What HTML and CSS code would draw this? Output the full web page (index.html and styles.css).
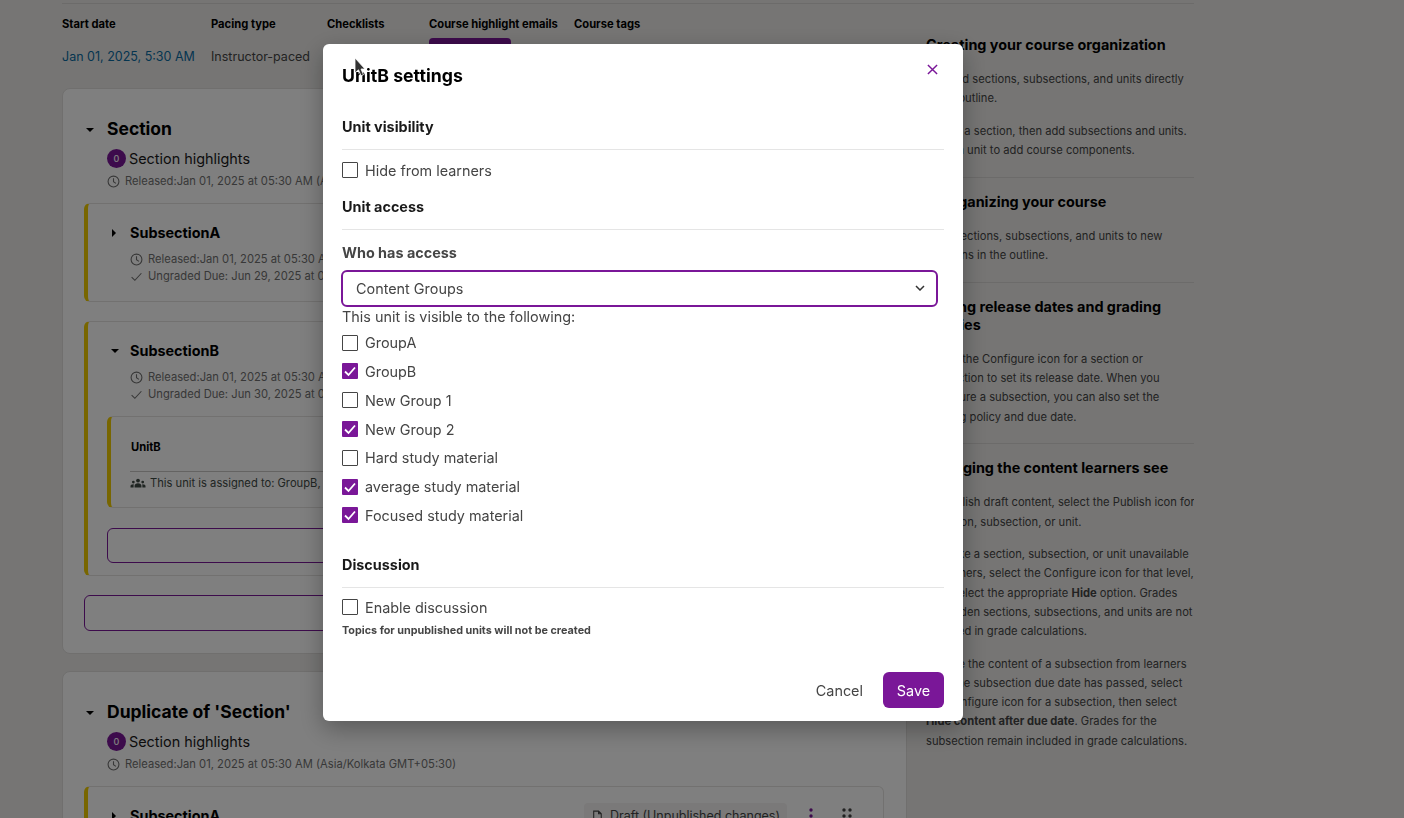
FILE: index.html
```html
<!DOCTYPE html>
<html lang="en">
<head>
    <meta charset="UTF-8">
    <title>Course outline</title>
    <link rel="stylesheet" href="styles.css">
</head>
<body>
    <div class="page">
        <main class="outline">
            <div class="stats">
                <div class="stat stat-date">
                    <div class="stat-label">Start date</div>
                    <a class="stat-link">Jan 01, 2025, 5:30 AM</a>
                </div>
                <div class="stat stat-pacing">
                    <div class="stat-label">Pacing type</div>
                    <div class="stat-value">Instructor-paced</div>
                </div>
                <div class="stat stat-check">
                    <div class="stat-label">Checklists</div>
                </div>
                <div class="stat stat-emails">
                    <div class="stat-label">Course highlight emails</div>
                    <div class="stat-button"></div>
                </div>
                <div class="stat">
                    <div class="stat-label">Course tags</div>
                </div>
            </div>

            <section class="section-card">
                <div class="section-title"><span class="caret-down"></span>Section</div>
                <div class="highlights"><span class="badge">0</span>Section highlights</div>
                <div class="meta meta-section">
                    <svg class="icon" viewBox="0 0 24 24"><circle cx="12" cy="12" r="10"/><path d="M12 6v6.500l4.500 3"/></svg>
                    Released:Jan 01, 2025 at 05:30 AM (Asia/Kolkata GMT+05:30)
                </div>

                <div class="sub-card sub-a">
                    <div class="sub-title"><span class="caret-right"></span>SubsectionA</div>
                    <div class="meta">
                        <svg class="icon" viewBox="0 0 24 24"><circle cx="12" cy="12" r="10"/><path d="M12 6v6.500l4.500 3"/></svg>
                        Released:Jan 01, 2025 at 05:30 AM (Asia/Kolkata GMT+05:30)
                    </div>
                    <div class="meta">
                        <svg class="icon" viewBox="0 0 24 24"><path d="M3 13l6 6L21 6"/></svg>
                        Ungraded Due: Jun 29, 2025 at 05:30 AM (Asia/Kolkata GMT+05:30)
                    </div>
                </div>

                <div class="sub-card sub-b">
                    <div class="sub-title"><span class="caret-small"></span>SubsectionB</div>
                    <div class="meta">
                        <svg class="icon" viewBox="0 0 24 24"><circle cx="12" cy="12" r="10"/><path d="M12 6v6.500l4.500 3"/></svg>
                        Released:Jan 01, 2025 at 05:30 AM (Asia/Kolkata GMT+05:30)
                    </div>
                    <div class="meta">
                        <svg class="icon" viewBox="0 0 24 24"><path d="M3 13l6 6L21 6"/></svg>
                        Ungraded Due: Jun 30, 2025 at 05:30 AM (Asia/Kolkata GMT+05:30)
                    </div>

                    <div class="unit-card">
                        <div class="unit-title">UnitB</div>
                        <div class="unit-access">
                            <svg class="icon-people" viewBox="0 0 24 16"><circle cx="12" cy="4" r="3"/><circle cx="4.500" cy="6.500" r="2.200"/><circle cx="19.500" cy="6.500" r="2.200"/><path d="M6.500 15v-2.500C6.500 10 9 8.500 12 8.500s5.500 1.500 5.500 4V15zM0 15v-2c0-1.800 1.700-3 4.500-3l.7.100C5 11 5 12 5 15zM24 15v-2c0-1.800-1.700-3-4.500-3l-.7.100C19 11 19 12 19 15z"/></svg>
                            This unit is assigned to: GroupB, New Group 2, average study material, Focused study material
                        </div>
                    </div>
                    <div class="add-box add-unit"></div>
                </div>
                <div class="add-box add-sub"></div>
            </section>

            <section class="section-card">
                <div class="section-title"><span class="caret-down"></span>Duplicate of 'Section'</div>
                <div class="highlights"><span class="badge">0</span>Section highlights</div>
                <div class="meta meta-section">
                    <svg class="icon" viewBox="0 0 24 24"><circle cx="12" cy="12" r="10"/><path d="M12 6v6.500l4.500 3"/></svg>
                    Released:Jan 01, 2025 at 05:30 AM (Asia/Kolkata GMT+05:30)
                </div>
                <div class="sub-card sub-a">
                    <div class="sub-title sub-title-row">
                        <span class="sub-name"><span class="caret-right"></span>SubsectionA</span>
                        <span class="status-pill">
                            <svg class="icon icon-dark" viewBox="0 0 24 24"><path d="M5 2h9l5 5v15H5zM14 2v5h5"/></svg>
                            Draft (Unpublished changes)
                        </span>
                        <svg class="icon-kebab" viewBox="0 0 4 16"><circle cx="2" cy="2" r="1.700"/><circle cx="2" cy="8" r="1.700"/><circle cx="2" cy="14" r="1.700"/></svg>
                        <svg class="icon-drag" viewBox="0 0 10 16"><circle cx="2" cy="2" r="1.700"/><circle cx="8" cy="2" r="1.700"/><circle cx="2" cy="8" r="1.700"/><circle cx="8" cy="8" r="1.700"/><circle cx="2" cy="14" r="1.700"/><circle cx="8" cy="14" r="1.700"/></svg>
                    </div>
                </div>
            </section>
        </main>

        <aside class="help">
            <h4 class="help-title">Creating your course organization</h4>
            <p>You add sections, subsections, and units directly in the outline.</p>
            <p>Create a section, then add subsections and units. Open a unit to add course components.</p>
            <hr>
            <h4 class="help-title">Reorganizing your course</h4>
            <p>Drag sections, subsections, and units to new locations in the outline.</p>
            <hr>
            <h4 class="help-title">Setting release dates and grading policies</h4>
            <p>Select the Configure icon for a section or subsection to set its release date. When you configure a subsection, you can also set the grading policy and due date.</p>
            <hr>
            <h4 class="help-title">Changing the content learners see</h4>
            <p class="help-wide">To publish draft content, select the Publish icon for a section, subsection, or unit.</p>
            <p>To make a section, subsection, or unit unavailable to learners, select the Configure icon for that level, then select the appropriate <strong>Hide</strong> option. Grades for hidden sections, subsections, and units are not included in grade calculations.</p>
            <p>To hide the content of a subsection from learners after the subsection due date has passed, select the Configure icon for a subsection, then select <strong>Hide content after due date</strong>. Grades for the subsection remain included in grade calculations.</p>
        </aside>
    </div>

    <div class="overlay">
        <div class="modal">
            <div class="modal-head">
                <h2>UnitB settings</h2>
                <svg class="icon-close" viewBox="0 0 12 12"><path d="M1 1l10 10M11 1L1 11"/></svg>
            </div>

            <h3 class="group-title">Unit visibility</h3>
            <label class="check check-hide"><span class="box"></span>Hide from learners</label>

            <h3 class="group-title group-access">Unit access</h3>
            <div class="who">Who has access</div>
            <div class="select">
                Content Groups
                <svg class="icon-chevron" viewBox="0 0 10 6"><path d="M1 1l4 4 4-4"/></svg>
            </div>
            <div class="visible-note">This unit is visible to the following:</div>

            <div class="check-list">
                <label class="check"><span class="box"></span>GroupA</label>
                <label class="check"><span class="box on"><svg viewBox="0 0 16 16"><path d="M3 8.500l3.500 3.500L13 4.500"/></svg></span>GroupB</label>
                <label class="check"><span class="box"></span>New Group 1</label>
                <label class="check"><span class="box on"><svg viewBox="0 0 16 16"><path d="M3 8.500l3.500 3.500L13 4.500"/></svg></span>New Group 2</label>
                <label class="check"><span class="box"></span>Hard study material</label>
                <label class="check"><span class="box on"><svg viewBox="0 0 16 16"><path d="M3 8.500l3.500 3.500L13 4.500"/></svg></span>average study material</label>
                <label class="check"><span class="box on"><svg viewBox="0 0 16 16"><path d="M3 8.500l3.500 3.500L13 4.500"/></svg></span>Focused study material</label>
            </div>

            <h3 class="group-title group-discussion">Discussion</h3>
            <label class="check check-discussion"><span class="box"></span>Enable discussion</label>
            <div class="hint">Topics for unpublished units will not be created</div>

            <div class="modal-foot">
                <button class="btn-cancel">Cancel</button>
                <button class="btn-save">Save</button>
            </div>
        </div>
    </div>

    <svg class="cursor" viewBox="0 0 12 20"><path d="M1 1v15l3.500-3.200 2.500 6 2.500-1-2.500-5.800H11z"/></svg>
</body>
</html>
```

FILE: styles.css
```css
* {
    box-sizing: border-box;
}

html, body {
    height: 818px;
    overflow: hidden;
}

body {
    margin: 0;
    font-family: Inter, 'Liberation Sans', sans-serif;
    background: #ecebe9;
    color: #454545;
}

.page {
    display: flex;
    width: 1132px;
    height: 818px;
    margin-left: 62px;
    margin-top: 3px;
    border-top: 1px solid #d8d6d4;
    overflow: hidden;
}

.outline {
    width: 845px;
    flex-shrink: 0;
}

/* stats row */
.stats {
    display: flex;
    gap: 16px;
    padding-top: 14px;
    height: 84px;
}

.stat-date { width: 133px; }
.stat-pacing { width: 100px; }
.stat-check { width: 86px; }
.stat-emails { width: 129px; }

.stat-label {
    font-size: 11.200px;
    line-height: 13px;
    font-weight: 700;
    color: #000;
    white-space: nowrap;
}

.stat-link, .stat-value {
    display: block;
    margin-top: 16px;
    font-size: 12.500px;
    line-height: 20px;
    white-space: nowrap;
}

.stat-link { color: #0a6aa1; }

.stat-button {
    width: 82px;
    height: 36px;
    margin-top: 7px;
    background: #7a1798;
    border-radius: 4px;
}

/* section cards */
.section-card {
    background: #fff;
    border: 1px solid #e0dedc;
    border-radius: 8px;
    padding: 28px 22px 22px 21px;
    margin-bottom: 17px;
}

.section-title {
    position: relative;
    padding-left: 23px;
    font-size: 17.500px;
    line-height: 24px;
    font-weight: 700;
    color: #000;
    display: flex;
    align-items: center;
}

.caret-down {
    position: absolute;
    left: 2px;
    top: 11px;
    border: 4px solid transparent;
    border-top-color: #000;
    border-bottom-width: 0;
}

.highlights {
    display: flex;
    align-items: center;
    gap: 3px;
    margin-top: 8px;
    padding-left: 23px;
    font-size: 14.400px;
    line-height: 19px;
    color: #1a1a1a;
}

.badge {
    width: 19px;
    height: 19px;
    border-radius: 50%;
    background: #7a1798;
    color: #fff;
    font-size: 9px;
    font-weight: 500;
    display: flex;
    align-items: center;
    justify-content: center;
}

.meta {
    display: flex;
    align-items: center;
    gap: 5px;
    font-size: 11.200px;
    line-height: 17px;
    color: #707070;
    white-space: nowrap;
}

.meta-section {
    margin-top: 5px;
    padding-left: 23px;
}

.icon {
    width: 13px;
    height: 13px;
    fill: none;
    stroke: #707070;
    stroke-width: 2;
}

.icon-dark {
    stroke: #454545;
}

/* subsections */
.sub-card {
    background: #fff;
    border: 1px solid #e4e2e0;
    border-left: 4px solid #f0cc00;
    border-radius: 6px;
    margin-top: 13px;
    padding: 19px 0 0 42px;
    min-width: 0;
}

.sub-a {
    height: 99px;
}

.sub-b {
    height: 255px;
    margin-top: 19px;
}

.sub-title {
    position: relative;
    font-size: 14.400px;
    line-height: 20px;
    font-weight: 700;
    color: #000;
    margin-bottom: 8px;
}

.sub-title-row {
    display: flex;
    align-items: center;
    height: 20px;
    padding-right: 31px;
}

.sub-name {
    flex: 1;
    position: relative;
}

.caret-right {
    position: absolute;
    left: -18px;
    top: 6px;
    border: 4px solid transparent;
    border-left-color: #000;
    border-right-width: 0;
}

.caret-small {
    position: absolute;
    left: -19px;
    top: 8px;
    border: 4px solid transparent;
    border-top-color: #000;
    border-bottom-width: 0;
}

.status-pill {
    display: flex;
    align-items: center;
    gap: 6px;
    width: 203px;
    height: 26px;
    padding: 0 7px;
    background: #f4f3f2;
    border-radius: 4px;
    font-size: 12.500px;
    font-weight: 400;
    color: #454545;
    white-space: nowrap;
    flex-shrink: 0;
}

.icon-kebab {
    width: 4px;
    height: 16px;
    margin-left: 22px;
    fill: #7a1798;
    flex-shrink: 0;
}

.icon-drag {
    width: 10px;
    height: 16px;
    margin-left: 29px;
    fill: #454545;
    flex-shrink: 0;
}

.unit-card {
    margin-left: -23px;
    margin-top: 13px;
    height: 92px;
    border: 1px solid #e4e2e0;
    border-left: 4px solid #f0cc00;
    border-radius: 6px;
    padding: 23px 0 0 20px;
    overflow: hidden;
}

.unit-title {
    font-size: 11.200px;
    line-height: 14px;
    font-weight: 700;
    color: #000;
    height: 31px;
}

.unit-access {
    display: flex;
    align-items: center;
    gap: 4px;
    margin-left: -1px;
    border-top: 1px solid #c8c6c4;
    padding-top: 3px;
    font-size: 11.200px;
    line-height: 16px;
    color: #3f4a45;
    white-space: nowrap;
}

.icon-people {
    width: 16px;
    height: 10px;
    fill: #3f4a45;
}

.add-box {
    height: 35px;
    border: 1px solid #7a1798;
    border-radius: 6px;
    background: #fff;
}

.add-unit {
    margin: 20px 21px 0 -23px;
}

.add-sub {
    height: 36px;
    margin-top: 19px;
}

/* right help column */
.help {
    flex: 1;
    padding: 32px 0 0 19px;
    font-size: 11.200px;
    line-height: 19.250px;
    color: #454545;
}

.help-title {
    margin: 0 0 16px;
    font-size: 14.400px;
    line-height: 18px;
    font-weight: 700;
    color: #000;
}

.help p {
    margin: 0 0 13.250px;
}

.help p.help-wide {
    margin-right: -4px;
}

.help hr {
    margin: 16.500px 0 15px;
    border: 0;
    border-top: 1px solid #d8d6d4;
}

.help strong {
    font-weight: 700;
}

/* modal */
.overlay {
    position: fixed;
    top: 0;
    left: 0;
    width: 100%;
    height: 100%;
    background: rgba(0, 0, 0, 0.5);
    padding: 44px 0 0 323px;
}

.modal {
    width: 640px;
    height: 677px;
    background: #fff;
    border-radius: 6px;
    padding: 0 19px;
    position: relative;
    box-shadow: 0 8px 24px rgba(0, 0, 0, 0.3);
}

.modal-head {
    display: flex;
    justify-content: space-between;
    padding-top: 20px;
    height: 73px;
}

.modal-head h2 {
    margin: 0;
    font-size: 17.700px;
    line-height: 24px;
    font-weight: 700;
    color: #000;
}

.icon-close {
    width: 11px;
    height: 11px;
    margin: 0 6px 0 0;
    fill: none;
    stroke: #7a1798;
    stroke-width: 1.600;
}

.group-title {
    margin: 0;
    padding-bottom: 12px;
    border-bottom: 1px solid #e5e5e5;
    font-size: 14.400px;
    line-height: 20px;
    font-weight: 700;
    color: #1a1a1a;
}

.check {
    display: flex;
    align-items: center;
    gap: 7px;
    height: 28.800px;
    font-size: 14.400px;
    color: #454545;
}

.box {
    width: 16px;
    height: 16px;
    border: 1px solid #454545;
    border-radius: 1px;
    background: #fff;
    flex-shrink: 0;
}

.box.on {
    background: #7a1798;
    border: 0;
    display: flex;
}

.box.on svg {
    width: 16px;
    height: 16px;
    fill: none;
    stroke: #fff;
    stroke-width: 1.800;
}

.check-hide {
    margin-top: 6px;
}

.group-access {
    margin-top: 12px;
}

.who {
    margin-top: 13px;
    font-size: 14.400px;
    line-height: 20px;
    font-weight: 700;
    color: #454545;
}

.select {
    display: flex;
    align-items: center;
    justify-content: space-between;
    width: 597px;
    height: 37px;
    margin-top: 7px;
    margin-left: -1px;
    padding: 0 11px 0 13px;
    border: 2px solid #7a1798;
    border-radius: 6px;
    font-size: 14.400px;
    color: #454545;
}

.icon-chevron {
    width: 10px;
    height: 6px;
    fill: none;
    stroke: #333;
    stroke-width: 1.500;
}

.visible-note {
    font-size: 14.400px;
    line-height: 20px;
    color: #454545;
}

.check-list {
    margin-top: 1.500px;
}

.group-discussion {
    margin-top: 25px;
}

.check-discussion {
    margin-top: 5px;
}

.hint {
    margin-top: 1px;
    font-size: 10.800px;
    line-height: 16px;
    font-weight: 700;
    color: #454545;
}

.modal-foot {
    position: absolute;
    right: 19px;
    bottom: 13px;
    display: flex;
    align-items: center;
    gap: 20px;
}

.btn-cancel {
    border: 0;
    background: none;
    padding: 0;
    font: inherit;
    font-size: 14.400px;
    color: #454545;
}

.btn-save {
    width: 61px;
    height: 36px;
    border: 0;
    border-radius: 6px;
    background: #7a1798;
    color: #fff;
    font: inherit;
    font-size: 14.400px;
}

.cursor {
    position: fixed;
    left: 354px;
    top: 57px;
    width: 12px;
    height: 20px;
    fill: #333;
    stroke: #fff;
    stroke-width: 0.800;
}
```
